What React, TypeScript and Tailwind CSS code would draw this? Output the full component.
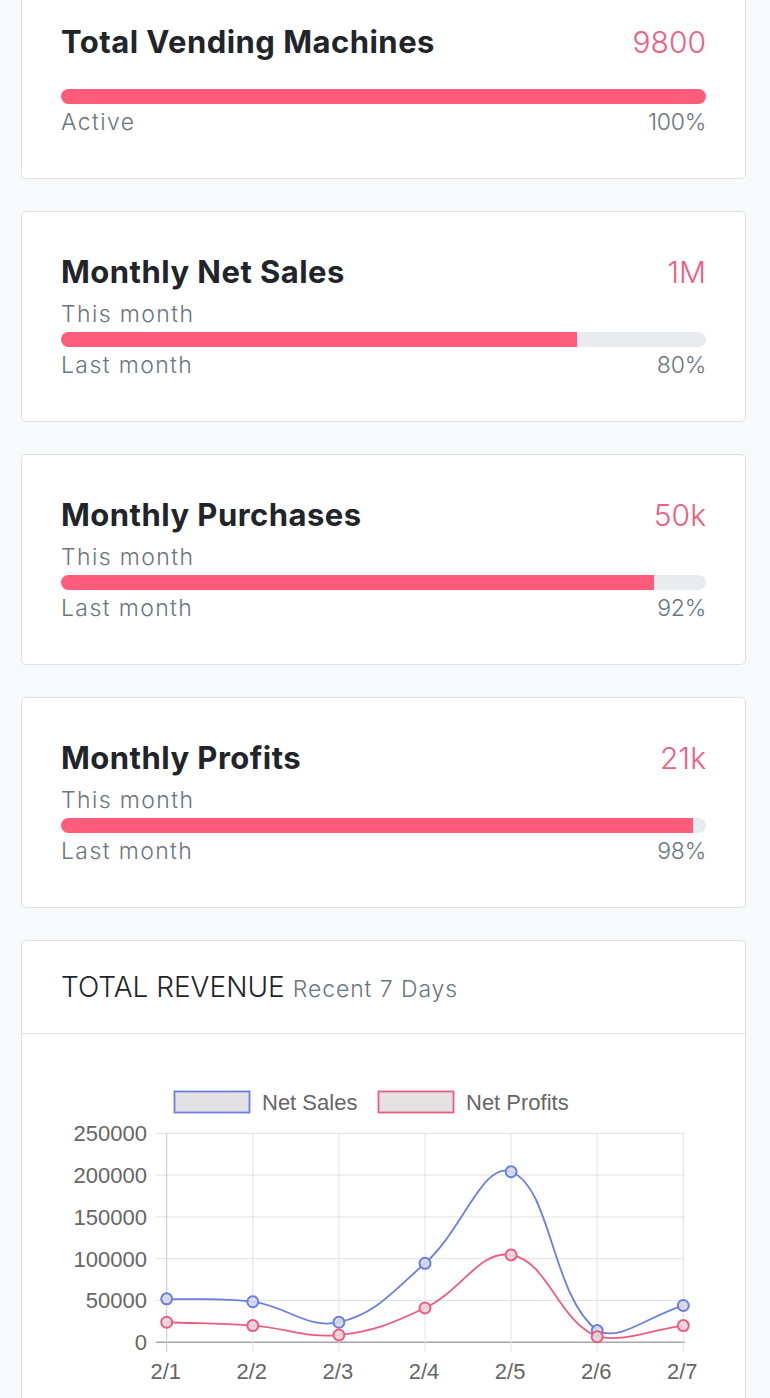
import React from 'react'

type Stat = {
  title: string
  value: string
  percent: number
  label: string
  sub?: string
}

const stats: Stat[] = [
  { title: 'Total Vending Machines', value: '9800', percent: 100, label: 'Active' },
  { title: 'Monthly Net Sales', value: '1M', percent: 80, label: 'Last month', sub: 'This month' },
  { title: 'Monthly Purchases', value: '50k', percent: 92, label: 'Last month', sub: 'This month' },
  { title: 'Monthly Profits', value: '21k', percent: 98, label: 'Last month', sub: 'This month' },
]

function StatCard({ stat, first }: { stat: Stat; first?: boolean }) {
  return (
    <div
      className={`rounded-[5px] border border-[#dfe1e4] bg-white px-[39px] pt-[42px] pb-[42px] ${first ? '-mt-[19px]' : ''}`}
    >
      <div className="flex h-9 items-center justify-between">
        <h2 className="text-[31px] leading-9 font-bold tracking-[0.015em] text-[#212529]">{stat.title}</h2>
        <span className="text-[30px] leading-9 font-light text-[#ef5e80]">{stat.value}</span>
      </div>
      {stat.sub ? (
        <div className="mt-[10px] text-[23px] leading-7 font-light tracking-[0.06em] text-[#6c757d]">{stat.sub}</div>
      ) : null}
      <div className={`${stat.sub ? 'mt-1' : 'mt-[29px]'} h-[15px] overflow-hidden rounded-full bg-[#e9ecef]`}>
        <div className="h-full bg-[#ff5c7c]" style={{ width: `${stat.percent}%` }} />
      </div>
      <div className="mt-1 flex justify-between text-[23px] leading-7 font-light text-[#6c757d]">
        <span className="tracking-[0.06em]">{stat.label}</span>
        <span className="tracking-[-0.01em]">{stat.percent}%</span>
      </div>
    </div>
  )
}

// chart geometry, in page pixels
const X0 = 166.7
const XSTEP = 86.1
const Y0 = 1343.3
const YTOP = 1134.3
const YMAX = 250000
const labels = ['2/1', '2/2', '2/3', '2/4', '2/5', '2/6', '2/7']
const sales = [52000, 48500, 24000, 94500, 204000, 14000, 44000]
const profits = [24000, 20000, 8700, 41000, 104500, 6700, 20000]

const px = (i: number) => X0 + XSTEP * i
const py = (v: number) => Y0 - (v / YMAX) * (Y0 - YTOP)
const clamp = (v: number, lo: number, hi: number) => Math.min(hi, Math.max(lo, v))

function curve(values: number[]) {
  const pts = values.map((v, i) => ({ x: px(i), y: py(v) }))
  const t = 0.4
  const ctrl = pts.map((p, i) => {
    const a = pts[i - 1] ?? p
    const b = pts[i + 1] ?? p
    const d01 = Math.hypot(p.x - a.x, p.y - a.y)
    const d12 = Math.hypot(b.x - p.x, b.y - p.y)
    const sum = d01 + d12 || 1
    const fa = (t * d01) / sum
    const fb = (t * d12) / sum
    const cap = (x: number, y: number) => ({ x: clamp(x, X0, px(6)), y: clamp(y, YTOP, Y0) })
    return {
      prev: cap(p.x - fa * (b.x - a.x), p.y - fa * (b.y - a.y)),
      next: cap(p.x + fb * (b.x - a.x), p.y + fb * (b.y - a.y)),
    }
  })
  let d = `M ${pts[0].x} ${pts[0].y}`
  for (let i = 1; i < pts.length; i++) {
    const c1 = ctrl[i - 1].next
    const c2 = ctrl[i].prev
    d += ` C ${c1.x} ${c1.y} ${c2.x} ${c2.y} ${pts[i].x} ${pts[i].y}`
  }
  return { d, pts }
}

function RevenueChart() {
  const blue = '#6b7fe3'
  const red = '#ee5b7f'
  const s = curve(sales)
  const p = curve(profits)
  const ticks = [0, 50000, 100000, 150000, 200000, 250000]
  return (
    <svg
      width="723"
      height="400"
      viewBox="22 1035 723 400"
      className="block"
      style={{ fontFamily: '"Liberation Sans", Arial, sans-serif' }}
    >
      {/* legend */}
      <rect x="174.5" y="1092.5" width="75" height="21" fill="#e2e2e4" stroke={blue} strokeWidth="1.8" />
      <text x="262" y="1111" fontSize="22" fill="#666">Net Sales</text>
      <rect x="378.5" y="1092.5" width="75" height="21" fill="#e4e2e3" stroke={red} strokeWidth="1.8" />
      <text x="466" y="1111" fontSize="22" fill="#666">Net Profits</text>

      {/* grid */}
      {ticks.map((v) => (
        <g key={v}>
          <line
            x1="156"
            x2="685"
            y1={py(v)}
            y2={py(v)}
            stroke={v === 0 ? '#a6a6a6' : '#e2e2e2'}
            strokeWidth={v === 0 ? 1.4 : 1}
          />
          <text x="147" y={py(v) + 7.8} fontSize="22" fill="#666" textAnchor="end">
            {v}
          </text>
        </g>
      ))}
      {labels.map((l, i) => (
        <g key={l}>
          <line
            x1={px(i)}
            x2={px(i)}
            y1={YTOP}
            y2="1353"
            stroke={i === 0 ? '#c8c8c8' : '#e2e2e2'}
            strokeWidth="1"
          />
          <text x={px(i) - 1} y="1380" fontSize="22" fill="#666" textAnchor="middle">
            {l}
          </text>
        </g>
      ))}

      {/* lines */}
      <path d={s.d} fill="none" stroke={blue} strokeWidth="1.8" />
      <path d={p.d} fill="none" stroke={red} strokeWidth="1.8" />
      {s.pts.map((pt, i) => (
        <circle key={`s${i}`} cx={pt.x} cy={pt.y} r="5.5" fill="rgba(214,216,230,0.9)" stroke={blue} strokeWidth="2" />
      ))}
      {p.pts.map((pt, i) => (
        <circle key={`p${i}`} cx={pt.x} cy={pt.y} r="5.5" fill="rgba(230,214,220,0.9)" stroke={red} strokeWidth="2" />
      ))}
    </svg>
  )
}

export default function App() {
  return (
    <div className="min-h-screen overflow-hidden bg-[#f8f9fa] pl-[21px] pr-[24px] font-['Inter','Noto_Sans',sans-serif]">
      <div className="flex flex-col gap-8">
        {stats.map((s, i) => (
          <StatCard key={s.title} stat={s} first={i === 0} />
        ))}
        <div className="rounded-[5px] border border-[#dfe1e4] bg-white">
          <div className="flex h-[93px] items-baseline border-b border-[#dfe1e4] px-[39px] pt-[30px] leading-8">
            <span className="text-[28px] font-light text-[#212529]">TOTAL REVENUE</span>
            <span className="ml-[8px] text-[23px] font-light tracking-[0.04em] text-[#6c757d]">Recent 7 Days</span>
          </div>
          <RevenueChart />
        </div>
      </div>
    </div>
  )
}
